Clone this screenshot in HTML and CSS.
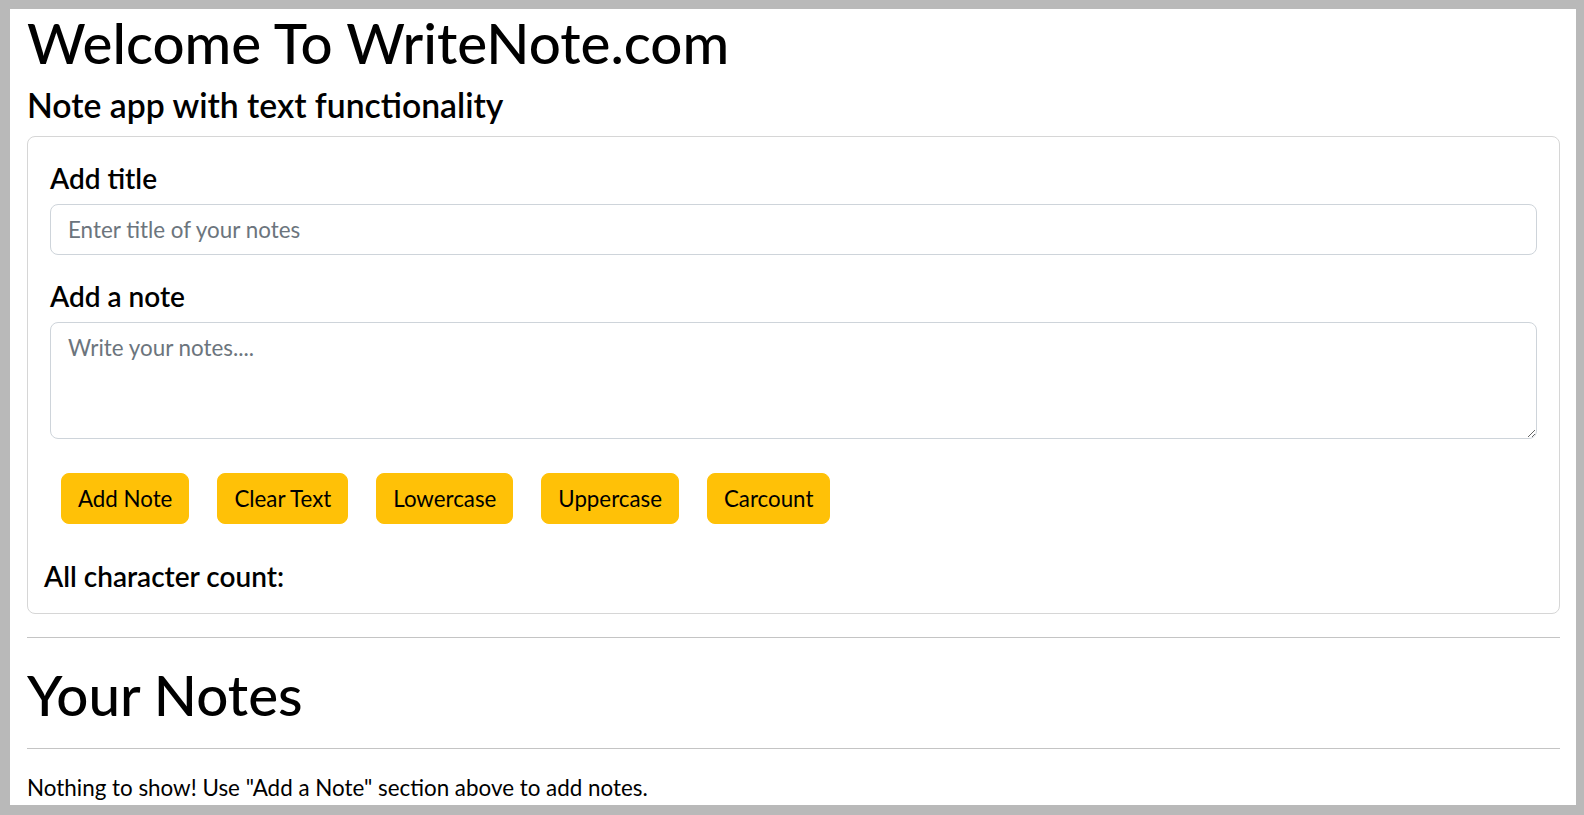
FILE: index.html
```html
<!DOCTYPE html>
<html lang="en">
<head>
<meta charset="utf-8">
<title>WriteNote</title>
<link rel="stylesheet" href="styles.css">
</head>
<body>
<div class="page">
  <h1 class="title">Welcome To WriteNote.com</h1>
  <h4 class="subtitle">Note app with text functionality</h4>
  <div class="card">
    <h5 class="label">Add title</h5>
    <input class="field" type="text" placeholder="Enter title of your notes">
    <h5 class="label label-note">Add a note</h5>
    <textarea class="field area" placeholder="Write your notes...."></textarea>
    <div class="actions">
      <button class="btn">Add Note</button>
      <button class="btn">Clear Text</button>
      <button class="btn">Lowercase</button>
      <button class="btn">Uppercase</button>
      <button class="btn">Carcount</button>
    </div>
    <h5 class="count">All character count:</h5>
  </div>
  <hr class="rule rule-top">
  <h1 class="title notes-title">Your Notes</h1>
  <hr class="rule rule-bottom">
  <div class="empty">Nothing to show! Use "Add a Note" section above to add notes.</div>
</div>
</body>
</html>
```
FILE: styles.css
```css
html, body {
  margin: 0;
  padding: 0;
}
body {
  background: #b9b9b9;
  height: 815px;
  overflow: hidden;
  font-family: Lato, "Noto Sans", sans-serif;
  color: #000;
}
.page {
  margin: 9px 8px 0 10px;
  height: 796px;
  background: #fff;
  overflow: hidden;
  box-sizing: border-box;
  padding: 0 16px 0 17px;
}
.title {
  font-size: 56.5px;
  font-weight: 500;
  line-height: 60px;
  margin: 3px 0 0;
}
.subtitle {
  font-size: 33.7px;
  font-weight: 600;
  line-height: 40px;
  margin: 13px 0 11px;
}
.card {
  border: 1px solid #d6d6d6;
  border-radius: 8px;
  padding: 24px 22px 20px;
  display: flex;
  flex-direction: column;
}
.label {
  font-size: 28px;
  font-weight: 600;
  line-height: 34px;
  margin: 0 0 9px;
}
.label-note {
  margin-top: 24px;
}
.field {
  box-sizing: border-box;
  width: 100%;
  height: 51px;
  border: 1px solid #ced4da;
  border-radius: 8px;
  padding: 8px 17px;
  font-family: inherit;
  font-size: 22.4px;
  line-height: 33.6px;
  color: #212529;
  margin: 0;
  display: block;
}
.field::placeholder {
  color: #6c757d;
}
.area {
  height: 117px;
  resize: vertical;
}
.actions {
  display: flex;
  gap: 28px;
  padding-left: 11px;
  margin-top: 34px;
}
.btn {
  height: 51px;
  border: 1px solid #ffc107;
  background: #ffc107;
  border-radius: 8px;
  padding: 0 16px;
  font-family: inherit;
  font-size: 22.3px;
  color: #000;
}
.count {
  font-size: 28px;
  font-weight: 600;
  line-height: 34px;
  margin: 35px 0 0 -6px;
}
.rule {
  border: 0;
  border-top: 1px solid #c4c4c4;
  margin: 0;
}
.rule-top {
  margin-top: 23px;
}
.notes-title {
  margin: 26px 0 24px;
}
.empty {
  margin-top: 22px;
  font-size: 22.4px;
  line-height: 33.6px;
  color: #000;
}
```
